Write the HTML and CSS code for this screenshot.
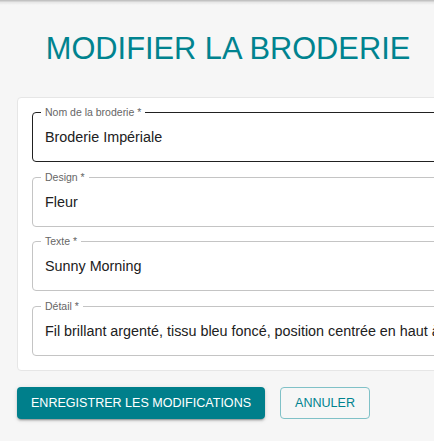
FILE: index.html
```html
<!DOCTYPE html>
<html lang="fr">
<head>
<meta charset="utf-8">
<title>Modifier la broderie</title>
<link rel="stylesheet" href="styles.css">
</head>
<body>
<div class="topshadow"></div>
<main class="page">
  <h1 class="title">MODIFIER LA BRODERIE</h1>
  <form class="card">
    <div class="field field-hover">
      <span class="field-label">Nom de la broderie *</span>
      <span class="field-value">Broderie Impériale</span>
    </div>
    <div class="field">
      <span class="field-label">Design *</span>
      <span class="field-value">Fleur</span>
    </div>
    <div class="field">
      <span class="field-label">Texte *</span>
      <span class="field-value">Sunny Morning</span>
    </div>
    <div class="field">
      <span class="field-label">Détail *</span>
      <span class="field-value">Fil brillant argenté, tissu bleu foncé, position centrée en haut à gauche</span>
    </div>
  </form>
  <div class="actions">
    <button class="btn btn-primary" type="button">ENREGISTRER LES MODIFICATIONS</button>
    <button class="btn btn-outline" type="button">ANNULER</button>
  </div>
</main>
</body>
</html>
```
FILE: styles.css
```css
html, body {
  margin: 0;
  padding: 0;
}
body {
  background: #f6f6f6;
  font-family: "Liberation Sans", Arial, sans-serif;
  overflow: hidden;
  width: 434px;
  height: 441px;
}
.topshadow {
  height: 5px;
  background: linear-gradient(to bottom, rgba(0,0,0,0.25), rgba(0,0,0,0.06) 50%, rgba(0,0,0,0));
}
.page {
  width: 456px;
  padding: 0 17px;
  box-sizing: border-box;
}
.title {
  margin: 27px 0 0;
  font-size: 30.8px;
  line-height: 34px;
  font-weight: normal;
  color: #00838f;
  text-align: center;
  white-space: nowrap;
}
.card {
  margin-top: 31px;
  width: 500px;
  box-sizing: border-box;
  background: #fff;
  border: 1px solid #e6e6e6;
  border-radius: 4px;
  padding: 14px;
  display: flex;
  flex-direction: column;
  gap: 14.7px;
}
.field {
  position: relative;
  height: 50px;
  box-sizing: border-box;
  border: 1px solid #c4c4c4;
  border-radius: 4px;
  padding: 0 12px;
  display: flex;
  align-items: center;
}
.field-hover {
  border-color: #212121;
}
.field-label {
  position: absolute;
  top: -7px;
  left: 8px;
  padding: 0 4px;
  background: #fff;
  font-size: 10.5px;
  line-height: 13px;
  color: #666;
  white-space: nowrap;
}
.field-value {
  font-size: 14.35px;
  color: #212121;
  white-space: nowrap;
}
.actions {
  margin-top: 16px;
  display: flex;
  gap: 15px;
}
.btn {
  height: 32px;
  box-sizing: border-box;
  padding: 0 14px;
  border-radius: 4px;
  font-family: "Liberation Sans", Arial, sans-serif;
  font-size: 12.55px;
  line-height: 1;
  cursor: pointer;
}
.btn-primary {
  background: #007f8b;
  color: #fff;
  border: none;
  box-shadow: 0 3px 1px -2px rgba(0,0,0,0.2), 0 2px 2px 0 rgba(0,0,0,0.14), 0 1px 5px 0 rgba(0,0,0,0.12);
}
.btn-outline {
  background: transparent;
  color: #00838f;
  border: 1px solid #80c1c7;
}
```
